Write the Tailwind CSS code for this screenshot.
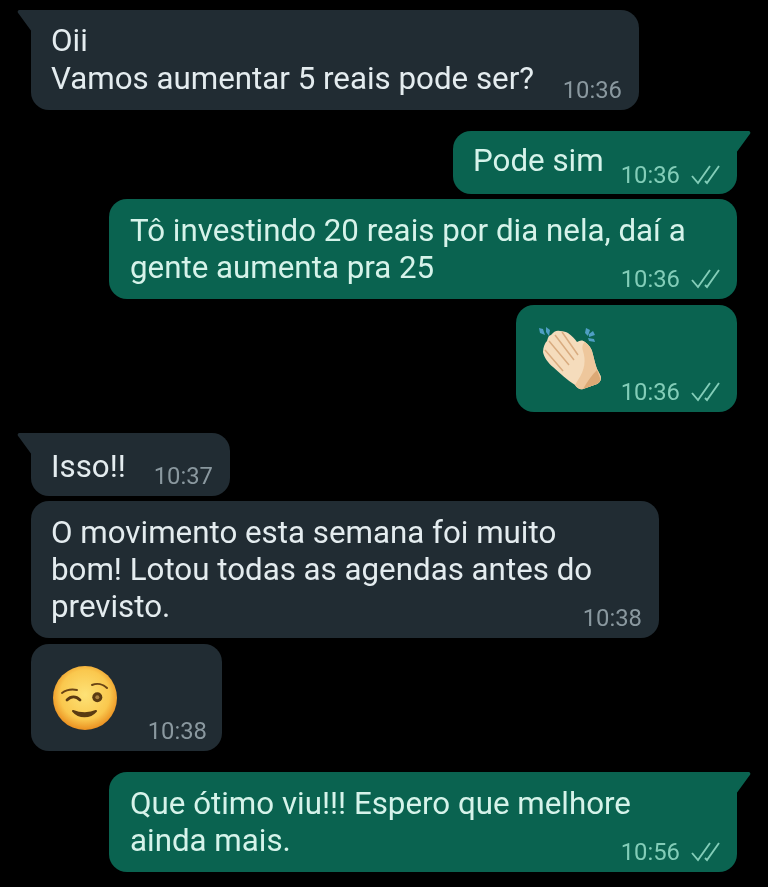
<!DOCTYPE html>
<html lang="pt">
<head>
<meta charset="utf-8">
<script src="https://cdn.jsdelivr.net/npm/@tailwindcss/browser@4"></script>
</head>
<body class="bg-black">
<main class="w-[768px] h-[887px] overflow-hidden bg-black flex flex-col pt-[10px] font-['Roboto',sans-serif] text-[31.300px] leading-[37px] blur-[0.4px]">

  <div class="relative self-start ml-[31px] w-[608px] h-[100px] rounded-[18px] rounded-tl-none bg-[#212c33] text-[#e4ecef] pl-[20px] pt-[12px]">
    <svg class="absolute left-[-14px] top-0" width="15" height="22" viewBox="0 0 15 22"><path d="M15 0H3C0.5 0 0 2 1.500 3.500L15 22Z" fill="#212c33"/></svg>
    <p class="leading-[38px]">Oii<br>Vamos aumentar 5 reais pode ser?</p>
    <span class="absolute right-[17px] bottom-[6px] text-[23.800px] leading-[28px] text-[#8a989f]">10:36</span>
  </div>

  <div class="relative self-end mt-[21px] mr-[31px] w-[284px] h-[63px] rounded-[18px] rounded-tr-none bg-[#0a6350] text-[#d6f3ea] pl-[20px] pt-[11px]">
    <svg class="absolute right-[-14px] top-0" width="15" height="22" viewBox="0 0 15 22"><path d="M0 0H12C14.500 0 15 2 13.500 3.500L0 22Z" fill="#0a6350"/></svg>
    <p>Pode sim</p>
    <span class="absolute right-[16px] bottom-[5px] flex items-center gap-[11px] text-[23.800px] leading-[28px] text-[#83cdb8]">10:36
      <svg width="30" height="22" viewBox="0 0 30 22" fill="none" stroke="#83cdb8" stroke-width="1.900"><path d="M1 12L7 19L19 2M14 17L16 19L28 2"/></svg></span>
  </div>

  <div class="relative self-end mt-[5px] mr-[31px] w-[628px] h-[100px] rounded-[18px] bg-[#0a6350] text-[#d6f3ea] pl-[21px] pt-[13px]">
    <p>Tô investindo 20 reais por dia nela, daí a<br>gente aumenta pra 25</p>
    <span class="absolute right-[16px] bottom-[6px] flex items-center gap-[11px] text-[23.800px] leading-[28px] text-[#83cdb8]">10:36
      <svg width="30" height="22" viewBox="0 0 30 22" fill="none" stroke="#83cdb8" stroke-width="1.900"><path d="M1 12L7 19L19 2M14 17L16 19L28 2"/></svg></span>
  </div>

  <div class="relative self-end mt-[6px] mr-[31px] w-[221px] h-[107px] rounded-[18px] bg-[#0a6350]">
    <svg class="absolute left-[20px] top-[17px]" width="72" height="72" viewBox="0 0 72 72">
      <path d="M3 6l4 1 2 6-5-2zM10 5l4 3-1 6-3-4z" fill="#4f9fc4"/>
      <path d="M50 6l4 2-2 6-3-3zM57 9l2 4-6 2 0-3zM52 16l6 1 1 3-6-1z" fill="#4f9fc4"/>
      <path d="M7 30C7 25 9 21 11 19C12 15 13 13 15 13C18 9 21 8 24 9C28 9 30 10 32 11C36 14 39 17 41 20C44 18 47 18 49 20C53 23 55 26 56 29C58 36 59 42 61 47C63 51 65 54 65 56C65 59 63 61 61 62L47 67C44 68 41 66 39 63C31 58 24 51 17 45C12 41 8 35 7 30Z" fill="#f5dcbc"/>
      <path d="M47 29C50 38 49 48 42 58L39 63C41 66 44 68 47 67L61 62C63 61 65 59 65 56C65 54 63 51 61 47C59 42 58 36 56 29C55 26 53 23 49 20C46 22 46 26 47 29Z" fill="#eec79c"/>
      <path d="M61 48L64 56C65 59 63 61 61 62L47 67C51 60 56 53 61 48Z" fill="#dca975"/>
      <path d="M13 19L33 43M19 13L38 38M26 10L42 33M9 28L27 49" stroke="#d9ac80" stroke-width="1.500" fill="none"/>
    </svg>
    <span class="absolute right-[16px] bottom-[6px] flex items-center gap-[11px] text-[23.800px] leading-[28px] text-[#83cdb8]">10:36
      <svg width="30" height="22" viewBox="0 0 30 22" fill="none" stroke="#83cdb8" stroke-width="1.900"><path d="M1 12L7 19L19 2M14 17L16 19L28 2"/></svg></span>
  </div>

  <div class="relative self-start mt-[21px] ml-[31px] w-[199px] h-[63px] rounded-[18px] rounded-tl-none bg-[#212c33] text-[#e4ecef] pl-[20px] pt-[15px]">
    <svg class="absolute left-[-14px] top-0" width="15" height="22" viewBox="0 0 15 22"><path d="M15 0H3C0.5 0 0 2 1.500 3.500L15 22Z" fill="#212c33"/></svg>
    <p>Isso!!</p>
    <span class="absolute right-[17px] bottom-[6px] text-[23.800px] leading-[28px] text-[#8a989f]">10:37</span>
  </div>

  <div class="relative self-start mt-[5px] ml-[31px] w-[628px] h-[137px] rounded-[18px] bg-[#212c33] text-[#e4ecef] pl-[20px] pt-[13px]">
    <p>O movimento esta semana foi muito<br>bom! Lotou todas as agendas antes do<br>previsto.</p>
    <span class="absolute right-[17px] bottom-[6px] text-[23.800px] leading-[28px] text-[#8a989f]">10:38</span>
  </div>

  <div class="relative self-start mt-[6px] ml-[31px] w-[191px] h-[107px] rounded-[18px] bg-[#212c33]">
    <svg class="absolute left-[21px] top-[21px]" width="66" height="66" viewBox="0 0 66 66">
      <defs><radialGradient id="f" cx="50%" cy="45%" r="55%"><stop offset="0%" stop-color="#fde277"/><stop offset="70%" stop-color="#fac84e"/><stop offset="100%" stop-color="#ea8f20"/></radialGradient></defs>
      <circle cx="33" cy="33" r="32" fill="url(#f)"/>
      <path d="M10 28C14 25 20 24 25 25" stroke="#6a4415" stroke-width="2" fill="none" stroke-linecap="round"/>
      <path d="M15 35C19 31 24 31 28 35" stroke="#5a3a12" stroke-width="2.800" fill="none" stroke-linecap="round"/>
      <path d="M40 20C45 18 51 19 55 23" stroke="#6a4415" stroke-width="2" fill="none" stroke-linecap="round"/>
      <circle cx="45.300" cy="32.300" r="5" fill="#5a3a12"/><circle cx="45.300" cy="32.300" r="2" fill="#a9803f"/>
      <path d="M21 46C27 53 38 53 44 46C38 49 28 49 21 46Z" stroke="#5a3a12" stroke-width="2" fill="#5a3a12" stroke-linejoin="round"/>
    </svg>
    <span class="absolute right-[15px] bottom-[6px] text-[23.800px] leading-[28px] text-[#8a989f]">10:38</span>
  </div>

  <div class="relative self-end mt-[21px] mr-[31px] w-[628px] h-[100px] rounded-[18px] rounded-tr-none bg-[#0a6350] text-[#d6f3ea] pl-[21px] pt-[13px]">
    <svg class="absolute right-[-14px] top-0" width="15" height="22" viewBox="0 0 15 22"><path d="M0 0H12C14.500 0 15 2 13.500 3.500L0 22Z" fill="#0a6350"/></svg>
    <p>Que ótimo viu!!! Espero que melhore<br>ainda mais.</p>
    <span class="absolute right-[16px] bottom-[6px] flex items-center gap-[11px] text-[23.800px] leading-[28px] text-[#83cdb8]">10:56
      <svg width="30" height="22" viewBox="0 0 30 22" fill="none" stroke="#83cdb8" stroke-width="1.900"><path d="M1 12L7 19L19 2M14 17L16 19L28 2"/></svg></span>
  </div>

</main>
</body>
</html>
